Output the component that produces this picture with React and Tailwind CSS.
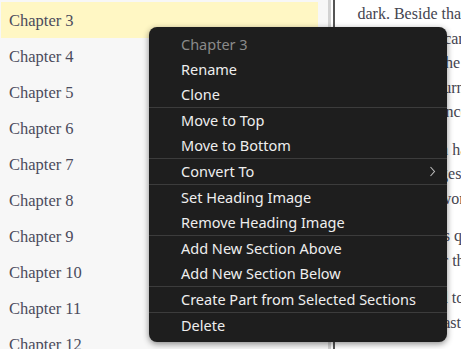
import React from "react";

const chapters = [3, 4, 5, 6, 7, 8, 9, 10, 11, 12];

const menu = [
  [{ label: "Chapter 3", title: true }, { label: "Rename" }, { label: "Clone" }],
  [{ label: "Move to Top" }, { label: "Move to Bottom" }],
  [{ label: "Convert To", sub: true }],
  [{ label: "Set Heading Image" }, { label: "Remove Heading Image" }],
  [{ label: "Add New Section Above" }, { label: "Add New Section Below" }],
  [{ label: "Create Part from Selected Sections" }],
  [{ label: "Delete" }],
];

// body copy behind the menu, only the far right edge shows
const paragraphs = [
  "dark. Beside that, there was the light of the lamp on the table and the flicker of candles across the room, ever so faint and pale, and the sound of the rain against the windows of the old house, and the fire that burned low in the grate while they waited for her answer in silence.",
  "Many of them had been standing in the hall for an hour, waiting for the carriages to pass along the road below, and nobody in the house said a word about the letter that had come that morning.",
  "The street was quiet and the sea beyond it looked calm as the night fell over the harbour and the town.",
  "They returned to the old hall together and waited for the others, and when at last they came, all was said.",
];

function ContextMenu() {
  return (
    <div className="absolute left-[149px] top-[27px] w-[298px] rounded-[8px] bg-[#1e1e1e] pt-[5px] pb-[4px] shadow-[0_2px_6px_rgba(0,0,0,0.45)] font-['Noto_Sans',sans-serif] text-[14.5px]">
      {menu.map((group, gi) => (
        <div key={gi} className={gi > 0 ? "border-t border-[#3c3c3c]" : ""}>
          {group.map((item) => (
            <div
              key={item.label}
              className={`flex h-[25px] items-center justify-between pt-[1px] pl-[32px] pr-[11px] ${
                item.title ? "text-[#8a8a8a]" : "text-[#eeeeee]"
              }`}
            >
              <span>{item.label}</span>
              {item.sub && (
                <svg width="7" height="11" viewBox="0 0 7 11" fill="none" className="-mt-[1px]">
                  <path d="M1.5 1 L5.5 5.5 L1.5 10" stroke="#bdbdbd" strokeWidth="1.1" />
                </svg>
              )}
            </div>
          ))}
        </div>
      ))}
    </div>
  );
}

export default function App() {
  return (
    <div className="relative flex h-[349px] w-[461px] overflow-hidden bg-white font-['Liberation_Serif',serif]">
      <div className="w-[328px] shrink-0 bg-[#f7f7f7] pt-[2px] pl-[1px]">
        {chapters.map((n) => (
          <div
            key={n}
            className={`flex h-[36px] w-[317px] items-center pt-[2px] pl-[8px] text-[16.5px] text-[#4b4b5c] ${
              n === 3 ? "bg-[#fff7c4]" : ""
            }`}
          >
            Chapter {n}
          </div>
        ))}
      </div>
      <div className="w-[3px] shrink-0 bg-[#d2d2d2]" />
      <div className="w-[2px] shrink-0 bg-white" />
      <div className="w-[1.5px] shrink-0 bg-[#555555]" />
      <div className="min-w-0 flex-1 overflow-hidden pl-[23px] pt-[2px] text-[16px] leading-[24.5px] text-[#444450]">
        {paragraphs.map((p, i) => (
          <p key={i} className="mb-[13px] w-[420px]">
            {p}
          </p>
        ))}
      </div>
      <ContextMenu />
    </div>
  );
}
